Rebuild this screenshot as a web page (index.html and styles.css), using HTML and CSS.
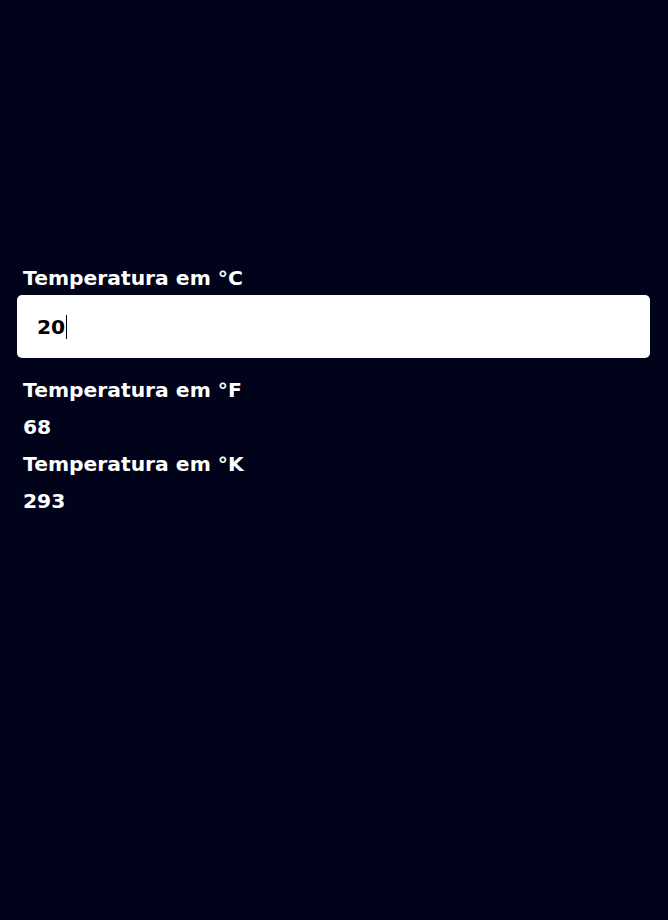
FILE: index.html
```html
<!DOCTYPE html>
<html lang="pt">
<head>
<meta charset="utf-8">
<title>Conversor</title>
<link rel="stylesheet" href="styles.css">
</head>
<body>
<main class="app">
  <label class="label" for="c">Temperatura em °C</label>
  <div class="field"><span class="value-in">20</span><span class="caret"></span></div>
  <div class="label">Temperatura em °F</div>
  <div class="value">68</div>
  <div class="label">Temperatura em °K</div>
  <div class="value">293</div>
</main>
</body>
</html>
```

FILE: styles.css
```css
html, body {
  margin: 0;
  padding: 0;
  background: #00031a;
  height: 100%;
}
body {
  font-family: "DejaVu Sans", Verdana, sans-serif;
  font-weight: bold;
  color: #ffffff;
}
.app {
  display: flex;
  flex-direction: column;
  padding: 265px 18px 0 17px;
}
.label {
  font-size: 20.3px;
  line-height: 26px;
  padding-left: 6px;
}
.field {
  margin: 4px 0 19px 0;
  height: 63px;
  background: #ffffff;
  border-radius: 5px;
  display: flex;
  align-items: center;
  padding-left: 20px;
  color: #000;
  font-size: 20.3px;
}
.caret {
  width: 1px;
  height: 24px;
  background: #000;
  margin-left: 1px;
}
.value {
  font-size: 20.3px;
  line-height: 48px;
  padding-left: 6px;
}
```
